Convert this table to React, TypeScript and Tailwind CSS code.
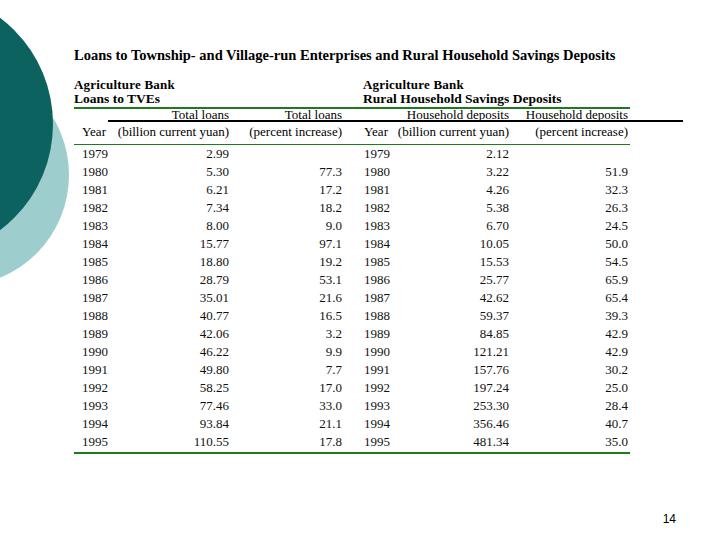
const rows: [string, string, string, string, string, string][] = [
  ["1979", "2.99", "", "1979", "2.12", ""],
  ["1980", "5.30", "77.3", "1980", "3.22", "51.9"],
  ["1981", "6.21", "17.2", "1981", "4.26", "32.3"],
  ["1982", "7.34", "18.2", "1982", "5.38", "26.3"],
  ["1983", "8.00", "9.0", "1983", "6.70", "24.5"],
  ["1984", "15.77", "97.1", "1984", "10.05", "50.0"],
  ["1985", "18.80", "19.2", "1985", "15.53", "54.5"],
  ["1986", "28.79", "53.1", "1986", "25.77", "65.9"],
  ["1987", "35.01", "21.6", "1987", "42.62", "65.4"],
  ["1988", "40.77", "16.5", "1988", "59.37", "39.3"],
  ["1989", "42.06", "3.2", "1989", "84.85", "42.9"],
  ["1990", "46.22", "9.9", "1990", "121.21", "42.9"],
  ["1991", "49.80", "7.7", "1991", "157.76", "30.2"],
  ["1992", "58.25", "17.0", "1992", "197.24", "25.0"],
  ["1993", "77.46", "33.0", "1993", "253.30", "28.4"],
  ["1994", "93.84", "21.1", "1994", "356.46", "40.7"],
  ["1995", "110.55", "17.8", "1995", "481.34", "35.0"],
];

const grid = "grid grid-cols-[38px_117px_126px_40px_114px_121px]";
const right = "flex justify-end whitespace-nowrap";

export default function App() {
  return (
    <div className="relative h-[540px] w-[720px] overflow-hidden bg-white">
      {/* background circles */}
      <div className="absolute left-[-153px] top-[64px] h-[222px] w-[222px] rounded-full bg-[#9dcdcd]" />
      <div className="absolute left-[-213px] top-[-9px] h-[266px] w-[266px] rounded-full bg-[#0b625f]" />

      <div className="relative flex flex-col pl-[74px] pt-[47px] font-['Liberation_Serif',serif] text-black">
        <h1 className="whitespace-nowrap text-[14.5px] font-bold leading-[16px]">
          Loans to Township- and Village-run Enterprises and Rural Household Savings Deposits
        </h1>

        <div className="w-[556px]">
          <div className={`${grid} mt-[15px] font-bold leading-[14px]`}>
            <div className="col-span-3">
              <div className="text-[13px] tracking-[0.2px]">Agriculture Bank</div>
              <div className="text-[13.5px]">Loans to TVEs</div>
            </div>
            <div className="col-span-3 pl-[8px]">
              <div className="text-[13px] tracking-[0.2px]">Agriculture Bank</div>
              <div className="text-[13.5px]">Rural Household Savings Deposits</div>
            </div>
          </div>
          <div className="mt-[1px] h-[2px] bg-[#1e7a1e]" />

          <div className={`${grid} text-[13px] leading-[12px]`}>
            <div />
            <div className={right}>Total loans</div>
            <div className={`${right} pr-[13px]`}>Total loans</div>
            <div />
            <div className={right}>Household deposits</div>
            <div className={`${right} pr-[2px]`}>Household deposits</div>
          </div>
          <div className="-mt-[1px] ml-[34px] h-[2px] w-[575px] bg-black" />
          <div className={`${grid} text-[13px] leading-[20px]`}>
            <div className="pl-[8px]">Year</div>
            <div className={right}>(billion current yuan)</div>
            <div className={`${right} pr-[13px]`}>(percent increase)</div>
            <div className="pl-[9px]">Year</div>
            <div className={right}>(billion current yuan)</div>
            <div className={`${right} pr-[2px]`}>(percent increase)</div>
          </div>
          <div className="mt-[2px] h-[1px] bg-[#1e7a1e]" />

          <div className="flex flex-col text-[13px] leading-[18px] text-[#111]">
            {rows.map((r) => (
              <div key={r[0]} className={grid}>
                <div className="pl-[8px]">{r[0]}</div>
                <div className={right}>{r[1]}</div>
                <div className={`${right} pr-[13px]`}>{r[2]}</div>
                <div className="pl-[9px]">{r[3]}</div>
                <div className={right}>{r[4]}</div>
                <div className={`${right} pr-[2px]`}>{r[5]}</div>
              </div>
            ))}
          </div>
          <div className="mt-[1px] h-[2px] bg-[#1e7a1e]" />
        </div>

        <div className="mt-[58px] w-[602px] text-right font-['Liberation_Sans',sans-serif] text-[12px] leading-[14px]">
          14
        </div>
      </div>
    </div>
  );
}
